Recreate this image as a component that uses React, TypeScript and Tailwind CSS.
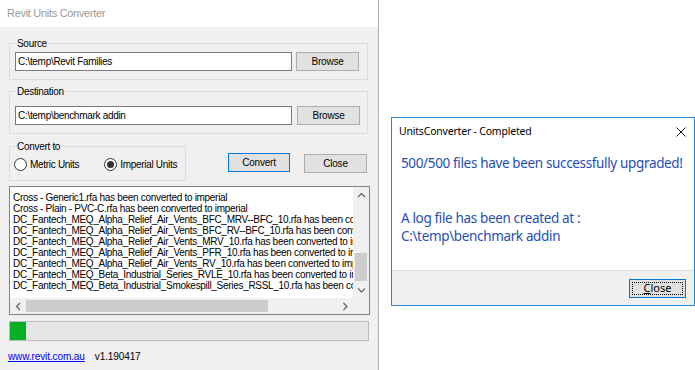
const sans = "font-['Liberation_Sans',Arial,sans-serif]";
const ui = "font-['Noto_Sans','Open_Sans',sans-serif]";

const logLines = [
  "Cross - Generic1.rfa has been converted to imperial",
  "Cross - Plain - PVC-C.rfa has been converted to imperial",
  "DC_Fantech_MEQ_Alpha_Relief_Air_Vents_BFC_MRV--BFC_10.rfa has been converted to imperial",
  "DC_Fantech_MEQ_Alpha_Relief_Air_Vents_BFC_RV--BFC_10.rfa has been converted to imperial",
  "DC_Fantech_MEQ_Alpha_Relief_Air_Vents_MRV_10.rfa has been converted to imperial",
  "DC_Fantech_MEQ_Alpha_Relief_Air_Vents_PFR_10.rfa has been converted to imperial",
  "DC_Fantech_MEQ_Alpha_Relief_Air_Vents_RV_10.rfa has been converted to imperial",
  "DC_Fantech_MEQ_Beta_Industrial_Series_RVLE_10.rfa has been converted to imperial",
  "DC_Fantech_MEQ_Beta_Industrial_Smokespill_Series_RSSL_10.rfa has been converted to imperial",
];

function Chevron({ dir }: { dir: "up" | "down" | "left" | "right" }) {
  const pts = {
    up: "1,5 4.5,1.5 8,5",
    down: "1,1.5 4.5,5 8,1.5",
    left: "5,1 1.5,4.5 5,8",
    right: "1.5,1 5,4.5 1.5,8",
  }[dir];
  const vertical = dir === "up" || dir === "down";
  return (
    <svg width={vertical ? 9 : 7} height={vertical ? 7 : 9} viewBox={vertical ? "0 0 9 7" : "0 0 7 9"}>
      <polyline points={pts} fill="none" stroke="#606060" strokeWidth="1.2" />
    </svg>
  );
}

function WinButton({ label, focused }: { label: string; focused?: boolean }) {
  return (
    <div
      className={`flex h-[19px] items-center justify-center border bg-[#e1e1e1] text-[10px] tracking-[-0.2px] text-black ${
        focused ? "border-[#0078d7]" : "border-[#adadad]"
      }`}
    >
      {label}
    </div>
  );
}

function Radio({ label, checked }: { label: string; checked?: boolean }) {
  return (
    <div className="flex items-center gap-[3px]">
      <div className="flex h-[13px] w-[13px] items-center justify-center rounded-full border border-[#333] bg-white">
        {checked && <div className="h-[7px] w-[7px] rounded-full bg-[#333]" />}
      </div>
      <span>{label}</span>
    </div>
  );
}

function MainWindow() {
  return (
    <div className={`flex h-[370px] w-[379px] shrink-0 flex-col border-r border-[#b0b0b0] ${sans}`}>
      <div className="flex h-[27px] items-center bg-white pl-[7px] text-[11px] tracking-[-0.3px] text-[#9a9a9a]">
        Revit Units Converter
      </div>
      <div className="flex flex-1 flex-col bg-[#f0f0f0] pl-[9px] pr-[10px] text-[10px] tracking-[-0.3px] text-black">
        <fieldset className="mt-[10px] w-[359px] border border-[#dcdcdc] px-0 pb-[8px]">
          <legend className="ml-[6px] px-px leading-[13px]">Source</legend>
          <div className="mt-[2px] flex items-center pl-[5px]">
            <div className="flex h-[19px] w-[277px] items-center border border-[#7a7a7a] bg-white pl-[2px]">
              C:\temp\Revit Families
            </div>
            <div className="ml-[4px] w-[63px]">
              <WinButton label="Browse" />
            </div>
          </div>
        </fieldset>

        <fieldset className="mt-[5px] w-[359px] border border-[#dcdcdc] px-0 pb-[8px]">
          <legend className="ml-[6px] px-px leading-[13px]">Destination</legend>
          <div className="mt-[8px] flex items-center pl-[5px]">
            <div className="flex h-[19px] w-[277px] items-center border border-[#7a7a7a] bg-white pl-[2px]">
              C:\temp\benchmark addin
            </div>
            <div className="ml-[5px] w-[63px]">
              <WinButton label="Browse" />
            </div>
          </div>
        </fieldset>

        <div className="mt-[6px] flex items-start">
          <fieldset className="w-[177px] border border-[#dcdcdc] px-0 pb-[8px]">
            <legend className="ml-[6px] px-px leading-[13px]">Convert to</legend>
            <div className="mt-[4px] flex items-center gap-[25px] pl-[4px]">
              <Radio label="Metric Units" />
              <Radio label="Imperial Units" checked />
            </div>
          </fieldset>
          <div className="ml-[42px] mt-[13px] w-[62px]">
            <WinButton label="Convert" focused />
          </div>
          <div className="ml-[14px] mt-[14px] w-[63px]">
            <WinButton label="Close" />
          </div>
        </div>

        <div className="mt-[5px] flex h-[129px] w-[361px] flex-col border border-[#828282] bg-white">
          <div className="flex min-h-0 flex-1">
            <div className="min-w-0 flex-1 overflow-hidden whitespace-nowrap pl-[3px] pt-[5px] leading-[11px]">
              {logLines.map((l) => (
                <div key={l}>{l}</div>
              ))}
            </div>
            <div className="flex w-[16px] flex-col bg-[#f0f0f0]">
              <div className="flex h-[16px] items-center justify-center">
                <Chevron dir="up" />
              </div>
              <div className="flex-1 px-[2px]">
                <div className="mt-[50px] h-[28px] bg-[#cdcdcd]" />
              </div>
              <div className="flex h-[16px] items-center justify-center">
                <Chevron dir="down" />
              </div>
            </div>
          </div>
          <div className="flex h-[16px] bg-[#f0f0f0]">
            <div className="flex w-[16px] items-center justify-center">
              <Chevron dir="left" />
            </div>
            <div className="flex-1 py-[2px]">
              <div className="h-full w-[242px] bg-[#cdcdcd]" />
            </div>
            <div className="flex w-[16px] items-center justify-center">
              <Chevron dir="right" />
            </div>
            <div className="w-[16px] bg-[#f0f0f0]" />
          </div>
        </div>

        <div className="mt-[6px] flex h-[20px] w-[360px] border border-[#bcbcbc] bg-[#e6e6e6]">
          <div className="h-full w-[16px] bg-[#06b025]" />
        </div>

        <div className="mt-[9px] flex items-center gap-[10px] leading-[13px] tracking-[-0.1px]">
          <span className="-ml-px text-[#0000ff] underline">www.revit.com.au</span>
          <span>v1.190417</span>
        </div>
      </div>
    </div>
  );
}

function CompletedDialog() {
  return (
    <div className={`ml-[12px] mt-[117px] flex h-[189px] w-[304px] shrink-0 flex-col border border-[#2b88d8] bg-white ${ui}`}>
      <div className="flex h-[28px] items-center justify-between pl-[7px] pr-[8px] text-[10.5px] tracking-[-0.2px] text-black">
        <span>UnitsConverter - Completed</span>
        <svg width="10" height="10" viewBox="0 0 10 10">
          <path d="M0.5 0.5L9.5 9.5M9.5 0.5L0.5 9.5" stroke="#111" strokeWidth="1" />
        </svg>
      </div>
      <div className="flex flex-1 flex-col whitespace-nowrap pl-[9px] text-[13.5px] leading-[18px] tracking-[-0.35px] text-[#1f4eb4]">
        <div className="mt-[8px]">500/500 files have been successfully upgraded!</div>
        <div className="mt-[37px]">A log file has been created at :</div>
        <div>C:\temp\benchmark addin</div>
      </div>
      <div className="flex h-[35px] items-start justify-end border-t border-[#dfdfdf] bg-[#f0f0f0] pr-[8px] pt-[8px]">
        <div className="flex h-[19px] w-[57px] items-center justify-center border border-[#0078d7] bg-[#e1e1e1] p-[2px]">
          <div className="flex h-full w-full items-center justify-center border border-dotted border-black text-[11px] text-black">
            <span>
              <span className="underline">C</span>lose
            </span>
          </div>
        </div>
      </div>
    </div>
  );
}

export default function App() {
  return (
    <div className="flex h-[370px] w-[695px] items-start overflow-hidden bg-white">
      <MainWindow />
      <CompletedDialog />
    </div>
  );
}
